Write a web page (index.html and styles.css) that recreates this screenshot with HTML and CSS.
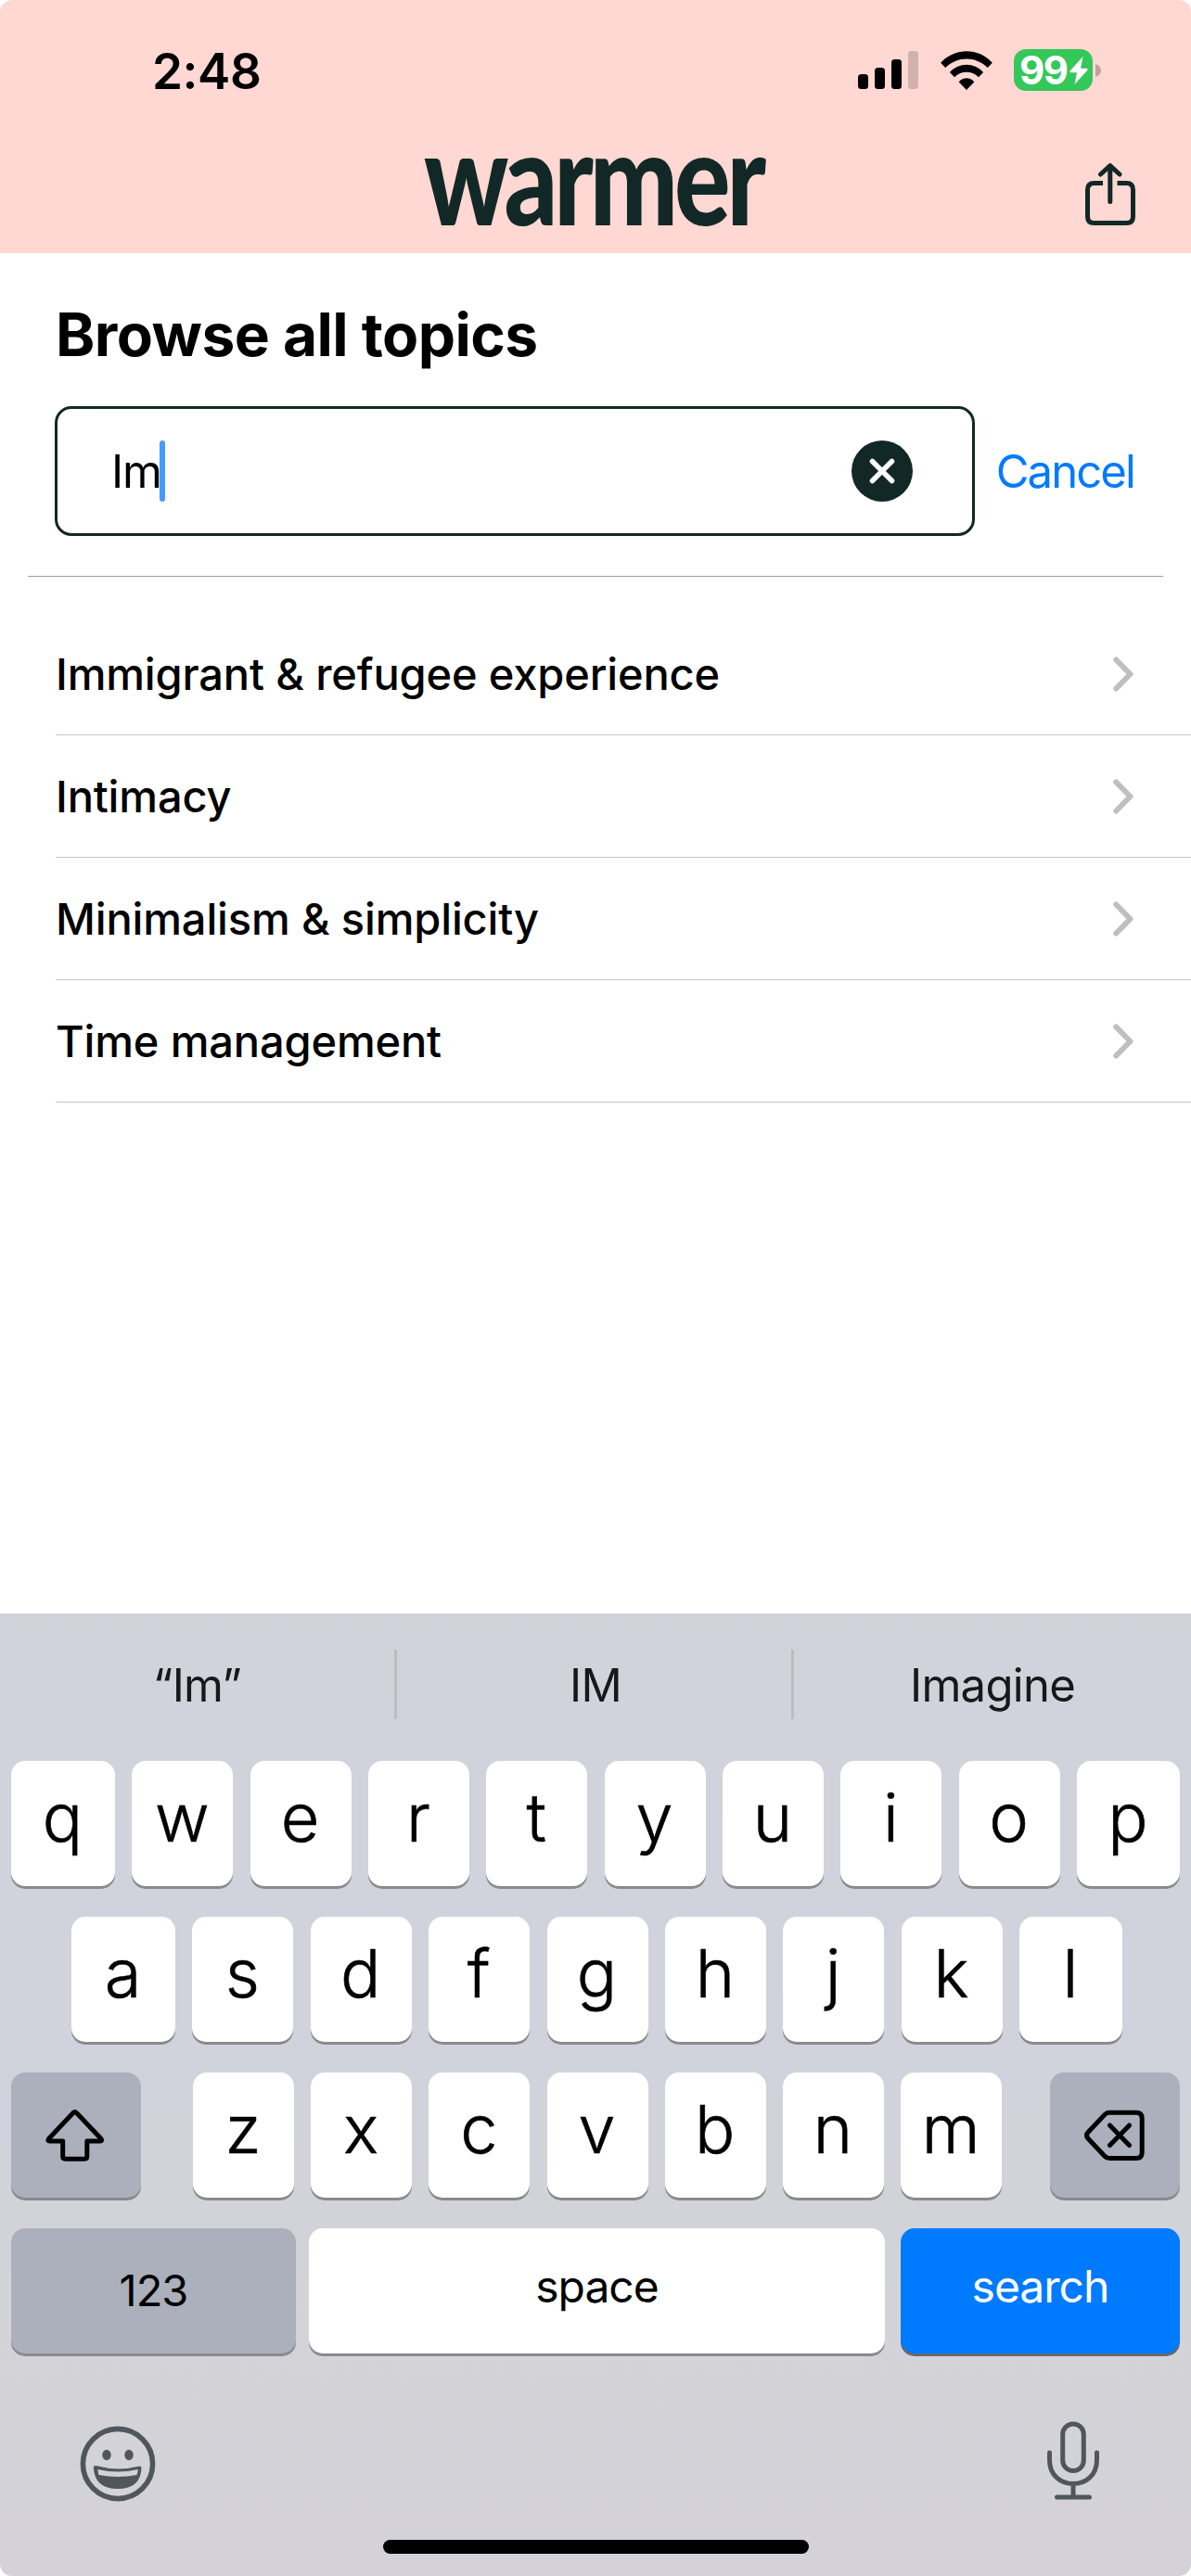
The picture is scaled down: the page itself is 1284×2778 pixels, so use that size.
FILE: index.html
```html
<!DOCTYPE html>
<html lang="en">
<head>
<meta charset="utf-8">
<title>Browse all topics</title>
<link rel="stylesheet" href="styles.css">
</head>
<body>
<div class="screen">
  <header class="header">
    <div class="status">
      <span class="time">2:48</span>
      <div class="indicators">
        <svg class="signal" width="65" height="41" viewBox="0 0 65 41">
          <rect x="0" y="25" width="11" height="16" rx="3.500"/>
          <rect x="18" y="18" width="11" height="23" rx="3.500"/>
          <rect x="36" y="9" width="11" height="32" rx="3.500"/>
          <rect x="54" y="0" width="11" height="41" rx="3.500" opacity=".18"/>
        </svg>
        <svg class="wifi" width="58" height="42" viewBox="0 0 58 43">
          <path d="M0.500 13C16-4 42-4 57.500 13L52.300 18.500C39 5.500 19 5.500 5.700 18.500Z"/>
          <path d="M10.500 23.500C21 12.300 37 12.300 47.500 23.500L42.300 29C34.500 21.500 23.500 21.500 15.700 29Z"/>
          <path d="M20.500 34.200C25 28.500 33 28.500 37.500 34.200L29 43Z"/>
        </svg>
        <div class="battery">
          <div class="battery-body">
            <span>99</span>
            <svg width="20" height="30" viewBox="0 0 20 30"><path d="M14.500 0L0.500 15.500Q0 17.200 1.500 17.200H8L5.500 30L19.500 14.500Q20 12.800 18.500 12.800H12Z"/></svg>
          </div>
          <svg class="nub" width="6" height="14" viewBox="0 0 6 14"><path d="M0 0Q6 2 6 7T0 14Z"/></svg>
        </div>
      </div>
    </div>
    <div class="nav">
      <svg class="logo" width="370" height="92" viewBox="0 0 370 92" role="img" aria-label="warmer">
        <text x="0" y="82" textLength="365" lengthAdjust="spacingAndGlyphs">warmer</text>
      </svg>
      <svg class="share" width="54" height="67" viewBox="0 0 54 67">
        <path d="M19 21.500H9.500Q2.500 21.500 2.500 28.500V57.500Q2.500 64.500 9.500 64.500H44.500Q51.500 64.500 51.500 57.500V28.500Q51.500 21.500 44.500 21.500H34.500" stroke-linecap="butt"/>
        <path d="M26.800 41.500V3M16.500 12L26.800 2.700L37 12"/>
      </svg>
    </div>
  </header>

  <main class="content">
    <h1 class="title">Browse all topics</h1>
    <div class="search-row">
      <div class="field">
        <span class="query">Im</span><i class="caret"></i>
        <svg class="clear" width="66" height="66" viewBox="0 0 67 67"><circle cx="33.500" cy="33.500" r="33.500"/><path d="M22.800 22.800L44.200 44.200M44.200 22.800L22.800 44.200"/></svg>
      </div>
      <a class="cancel">Cancel</a>
    </div>
    <ul class="topics">
      <li><span>Immigrant &amp; refugee experience</span><svg class="chev" width="22" height="38" viewBox="0 0 22 38"><path d="M3.300 3.500L18.500 19L3.300 34.500"/></svg></li>
      <li><span>Intimacy</span><svg class="chev" width="22" height="38" viewBox="0 0 22 38"><path d="M3.300 3.500L18.500 19L3.300 34.500"/></svg></li>
      <li><span>Minimalism &amp; simplicity</span><svg class="chev" width="22" height="38" viewBox="0 0 22 38"><path d="M3.300 3.500L18.500 19L3.300 34.500"/></svg></li>
      <li><span>Time management</span><svg class="chev" width="22" height="38" viewBox="0 0 22 38"><path d="M3.300 3.500L18.500 19L3.300 34.500"/></svg></li>
    </ul>
  </main>

  <section class="keyboard">
    <div class="suggestions"><span>“Im”</span><span>IM</span><span>Imagine</span></div>
    <div class="keys row-top">
      <b>q</b><b>w</b><b>e</b><b>r</b><b>t</b><b>y</b><b>u</b><b>i</b><b>o</b><b>p</b>
    </div>
    <div class="keys row-home">
      <b>a</b><b>s</b><b>d</b><b>f</b><b>g</b><b>h</b><b>j</b><b>k</b><b>l</b>
    </div>
    <div class="keys row-bottom">
      <b class="dark shift"><svg width="64" height="56" viewBox="0 0 64 56"><path d="M29.700 3.700Q31.700 1.700 33.700 3.700L60 31.500Q61.500 34 59 34H44.800V50.500Q44.800 53.200 42 53.200H21.500Q18.700 53.200 18.700 50.500V34H4.500Q2 34 3.500 31.500Z"/></svg></b>
      <b>z</b><b>x</b><b>c</b><b>v</b><b>b</b><b>n</b><b>m</b>
      <b class="dark delete"><svg width="65" height="56" viewBox="0 0 65 56"><path d="M27 3.200H56Q62.200 3.200 62.200 9.500V46.200Q62.200 52.500 56 52.500H27Q24 52.500 22 50.300L3.800 31Q1.200 27.800 3.800 24.700L22 5.400Q24 3.200 27 3.200ZM27.500 17L48.500 38.500M48.500 17L27.500 38.500"/></svg></b>
    </div>
    <div class="keys row-space">
      <b class="dark num">123</b><b class="word">space</b><b class="word go">search</b>
    </div>
    <div class="tools">
      <svg class="emoji" width="82" height="82" viewBox="0 0 82 82">
        <circle cx="41" cy="41" r="37.600" fill="none" stroke="#50575c" stroke-width="5.600"/>
        <ellipse cx="29" cy="31.500" rx="4.700" ry="5.700"/><ellipse cx="53" cy="31.500" rx="4.700" ry="5.700"/>
        <path d="M17.300 43Q41 49.500 64.700 43.500Q66 43.500 66.500 45Q66 68 41 68Q16 68 14.800 45Q15.500 42.500 17.300 43ZM19.500 47Q19.600 50.500 20.500 53Q41 57 61.500 53Q62.500 50.500 62.700 47Q41 52 19.500 47Z" fill-rule="evenodd"/>
      </svg>
      <svg width="56" height="86" viewBox="0 0 56 86" fill="none" stroke="#50575c" stroke-width="5" stroke-linecap="round">
        <rect x="16.700" y="3" width="22.600" height="50.500" rx="11.300"/>
        <path d="M2.500 34V42C2.500 76 53.500 76 53.500 42V34M28 68V82M10.500 82H45.500"/>
      </svg>
    </div>
    <div class="home"></div>
  </section>
</div>
</body>
</html>
```
FILE: styles.css
```css
* { box-sizing: border-box; }
body { margin: 0; background: #fff; font-family: Inter, "Liberation Sans", sans-serif; color: #000; }
svg { display: block; flex: none; }

.screen { width: 1284px; height: 2778px; border-radius: 13px; overflow: hidden; display: flex; flex-direction: column; background: #fff; }

.header { height: 273px; background: #ffd8d3; flex: none; }
.status { height: 151px; display: flex; justify-content: space-between; padding: 0 97px 0 164px; }
.time { font-size: 53px; font-weight: 600; line-height: 155px; letter-spacing: -0.4px; }
.indicators { display: flex; align-items: center; }
.signal { margin-right: 23px; }
.wifi { margin-right: 22px; }
.battery { display: flex; align-items: center; gap: 3px; }
.battery-body { width: 85px; height: 45px; border-radius: 13px; background: #34c759; display: flex; align-items: center; padding-left: 6px; color: #fff; }
.battery-body span { font-size: 42px; font-weight: 700; line-height: 45px; width: 54px; letter-spacing: -1.5px; }
.battery-body svg { fill: #fff; }
.nub { fill: #c39f9d; }

.nav { height: 122px; display: grid; grid-template-columns: 1fr 370px 1fr; padding: 0 60px; }
.logo { grid-column: 2; margin-top: 10px; overflow: visible; }
.logo text { font-family: Lato, sans-serif; font-size: 140px; font-weight: 900; letter-spacing: -5px; fill: #122826; }
.share { justify-self: end; margin-top: 25px; fill: none; stroke: #122826; stroke-width: 5; stroke-linecap: round; stroke-linejoin: round; }

.content { flex: 1; }
.title { margin: 0; padding: 49px 0 0 60px; font-size: 64px; line-height: 78px; font-weight: 700; letter-spacing: -0.55px; white-space: nowrap; }
.search-row { margin: 38px 30px 0; height: 184px; padding: 0 31px 44px 29px; border-bottom: 1px solid #98a2a3; display: flex; align-items: center; justify-content: space-between; }
.field { width: 992px; height: 140px; border: 3px solid #122826; border-radius: 18px; display: flex; align-items: center; padding: 0 64px 0 58px; flex: none; }
.query { font-size: 49px; line-height: 62px; padding-top: 2px; letter-spacing: -1.2px; width: 52px; white-space: nowrap; }
.caret { width: 6px; height: 66px; border-radius: 3px; background: #459bff; }
.clear { margin-left: auto; fill: #122826; }
.clear path { stroke: #fff; stroke-width: 5.6px; stroke-linecap: round; }
.cancel { font-size: 49px; line-height: 62px; padding-top: 2px; color: #007aff; letter-spacing: -1.9px; }

.topics { list-style: none; margin: 39px 0 0 60px; padding: 0; }
.topics li { height: 132px; border-bottom: 1px solid #c6c6c8; display: flex; align-items: center; justify-content: space-between; padding-right: 62px; font-size: 47px; font-weight: 500; letter-spacing: -0.15px; }
.chev { fill: none; stroke: #bfbfbf; stroke-width: 6; stroke-linecap: round; stroke-linejoin: round; }

.keyboard { height: 1038px; flex: none; background: linear-gradient(#d0d3da 0%, #d0d3dc 45%, #d2d3d8 65%, #d4d2d8 100%); }
.suggestions { height: 159px; padding: 39px 0 45px; display: grid; grid-template-columns: 428px 428px 1fr; }
.suggestions span { text-align: center; font-size: 49px; line-height: 77px; color: #17181a; letter-spacing: -0.7px; border-right: 3px solid #bbbdc2; padding-left: 3px; height: 75px; }
.suggestions span:first-child { padding-left: 0; }
.suggestions span:last-child { border: 0; padding: 0; }

.keys { display: grid; height: 135px; margin: 0 12px 33px; }
.keys b { font-weight: 300; -webkit-text-stroke: 0.6px; font-size: 72px; line-height: 122px; text-align: center; padding-right: 1px; background: #fff; border-radius: 15px; box-shadow: 0 3px 0 #898a8e; }
.row-top { grid-template-columns: 112px repeat(8, 109px) 111px; justify-content: space-between; }
.row-home { margin: 0 74px 33px 77px; grid-template-columns: 112px repeat(7, 109px) 111px; justify-content: space-between; }
.row-bottom { column-gap: 18.2px; grid-template-columns: 177.8px repeat(7, 109px) 173.5px; }
.keys .dark { background: #abb0bc; display: flex; align-items: center; justify-content: center; width: 140px; padding: 0; }
.keys .shift { padding-right: 3px; }
.keys .delete { justify-self: end; }
.dark svg { fill: none; stroke: #000; stroke-width: 5; stroke-linecap: round; stroke-linejoin: round; }
.row-space { grid-template-columns: 321px 638px 301px; }
.row-space .word:not(.go) { width: 621px; }
.keys .num { width: 307px; font-size: 47px; font-weight: 400; line-height: 133px; letter-spacing: -1px; padding-bottom: 2px; -webkit-text-stroke: 0; }
.keys .word { font-size: 48px; font-weight: 400; line-height: 126px; letter-spacing: -1px; padding: 0; -webkit-text-stroke: 0; }
.keys .go { background: #007aff; color: #fff; box-shadow: 0 3px 0 #67686c; }
.tools { height: 168px; padding: 40px 99px 0 86px; display: flex; justify-content: space-between; align-items: flex-start; fill: #50575c; }
.tools .emoji { margin-top: 5px; }
.home { width: 459px; height: 15px; border-radius: 8px; background: #000; margin: 0 auto; }
```
